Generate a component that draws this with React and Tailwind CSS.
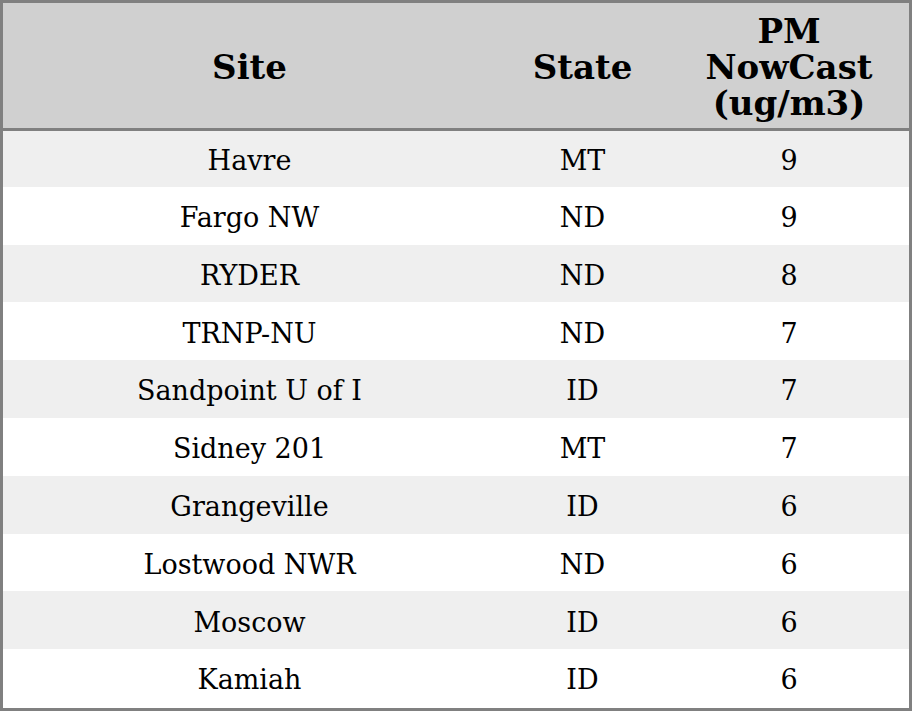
import React from "react";

const rows = [
  { site: "Havre", state: "MT", pm: 9 },
  { site: "Fargo NW", state: "ND", pm: 9 },
  { site: "RYDER", state: "ND", pm: 8 },
  { site: "TRNP-NU", state: "ND", pm: 7 },
  { site: "Sandpoint U of I", state: "ID", pm: 7 },
  { site: "Sidney 201", state: "MT", pm: 7 },
  { site: "Grangeville", state: "ID", pm: 6 },
  { site: "Lostwood NWR", state: "ND", pm: 6 },
  { site: "Moscow", state: "ID", pm: 6 },
  { site: "Kamiah", state: "ID", pm: 6 },
];

const App = () => {
  return (
    <div className="w-[912px] h-[711px] border-[3px] border-[#808080] bg-white font-['DejaVu_Serif',serif] text-black">
      <table className="w-full table-fixed border-collapse">
        <colgroup>
          <col className="w-[493px]" />
          <col className="w-[173px]" />
          <col className="w-[240px]" />
        </colgroup>
        <thead>
          <tr className="bg-[#d0d0d0] border-b-[3px] border-[#808080] h-[126px]">
            <th className="text-[34px] font-bold leading-[36px] pt-[3px] text-center align-middle">Site</th>
            <th className="text-[34px] font-bold leading-[36px] pt-[3px] text-center align-middle">State</th>
            <th className="text-[34px] font-bold leading-[36px] pt-[3px] text-center align-middle">
              PM
              <br />
              NowCast
              <br />
              (ug/m3)
            </th>
          </tr>
        </thead>
        <tbody>
          {rows.map((row, i) => (
            <tr key={row.site} className={`h-[57.8px] ${i % 2 === 0 ? "bg-[#efefef]" : "bg-white"}`}>
              <td className="text-[27px] pt-[5px] text-center align-middle">{row.site}</td>
              <td className="text-[27px] pt-[5px] text-center align-middle">{row.state}</td>
              <td className="text-[27px] pt-[5px] text-center align-middle">{row.pm}</td>
            </tr>
          ))}
        </tbody>
      </table>
    </div>
  );
};

export default App;
